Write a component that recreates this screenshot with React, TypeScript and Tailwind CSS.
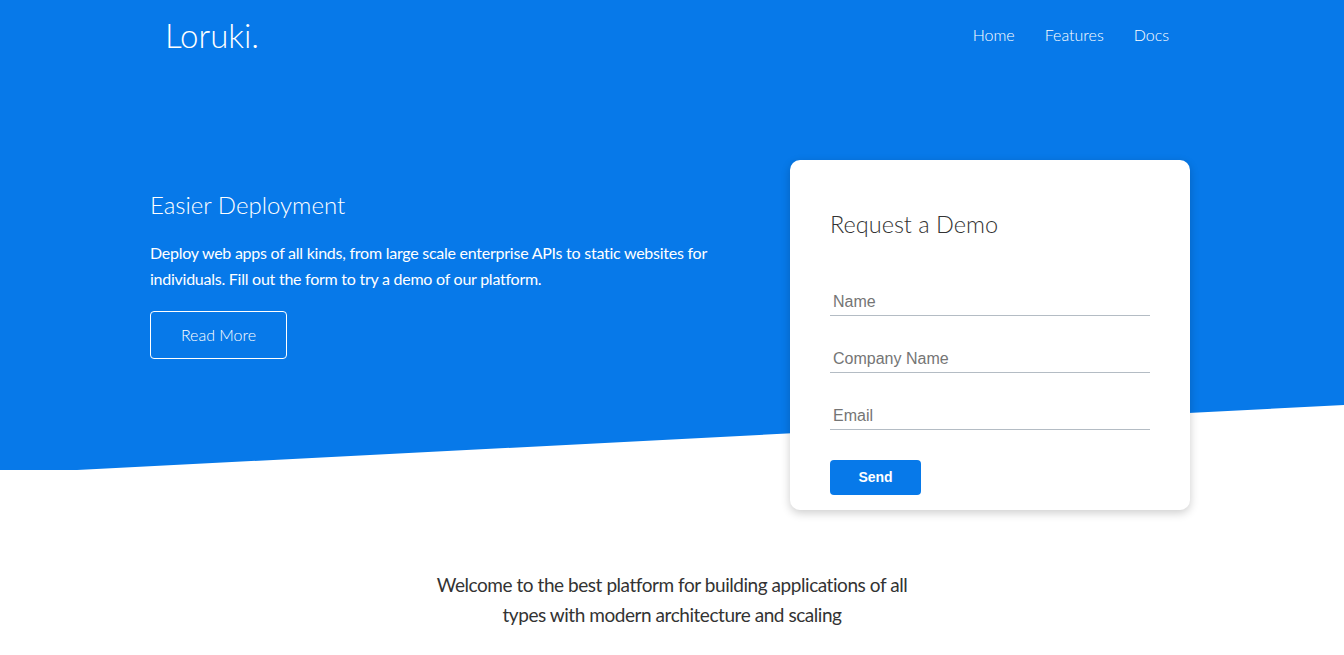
const inputs = ["Name", "Company Name", "Email"];

const App = () => {
  return (
    <div className="relative min-h-[655px] bg-white font-['Lato',sans-serif]">
      {/* slanted blue background behind header + hero */}
      <div className="absolute inset-x-0 top-0 h-[470px] bg-[#0779e9] [clip-path:polygon(0_0,100%_0,100%_405px,77px_470px,0_470px)]" />

      <div className="relative mx-auto w-[1044px]">
        <header className="flex h-[70px] items-center justify-between pl-[15px] pr-[25px] text-white">
          <h1 className="text-[33px] font-light leading-none">Loruki.</h1>
          <nav>
            <ul className="flex gap-[30px] text-[16px] font-light">
              <li>Home</li>
              <li>Features</li>
              <li>Docs</li>
            </ul>
          </nav>
        </header>

        <section className="flex justify-between pt-[90px]">
          <div className="w-[600px] pt-[30px] text-white">
            <h2 className="text-[24px] font-light leading-[30px]">Easier Deployment</h2>
            <p className="mt-[20px] text-[16px] leading-[26px] tracking-[-0.25px]">
              Deploy web apps of all kinds, from large scale enterprise APIs to static websites for individuals. Fill out
              the form to try a demo of our platform.
            </p>
            <button className="mt-[19px] h-[48px] w-[137px] rounded-[4px] border border-white text-[16px] font-light">
              Read More
            </button>
          </div>

          <div className="mr-[4px] h-[350px] w-[400px] rounded-[10px] bg-white px-[40px] pt-[50px] shadow-[0_3px_10px_rgba(0,0,0,0.2)]">
            <h2 className="text-[23.5px] font-light leading-[28px] text-[#333]">Request a Demo</h2>
            <form className="mt-[42px]">
              {inputs.map((p) => (
                <div key={p} className="mt-[21px] first:mt-0">
                  <input
                    placeholder={p}
                    className="h-[36px] w-[320px] border-b border-[#b4bcc4] px-[3px] pt-[8px] font-['Liberation_Sans',sans-serif] text-[16px] text-[#333] outline-none placeholder:text-[#757575]"
                  />
                </div>
              ))}
              <button
                type="button"
                className="mt-[30px] h-[35px] w-[91px] rounded-[4px] bg-[#0779e9] font-['Liberation_Sans',sans-serif] text-[14px] font-bold text-white"
              >
                Send
              </button>
            </form>
          </div>
        </section>
      </div>

      <p className="relative mx-auto mt-[60px] max-w-[500px] text-center text-[19px] leading-[30px] tracking-[-0.45px] text-[#333]">
        Welcome to the best platform for building applications of all types with modern architecture and scaling
      </p>
    </div>
  );
};

export default App;
